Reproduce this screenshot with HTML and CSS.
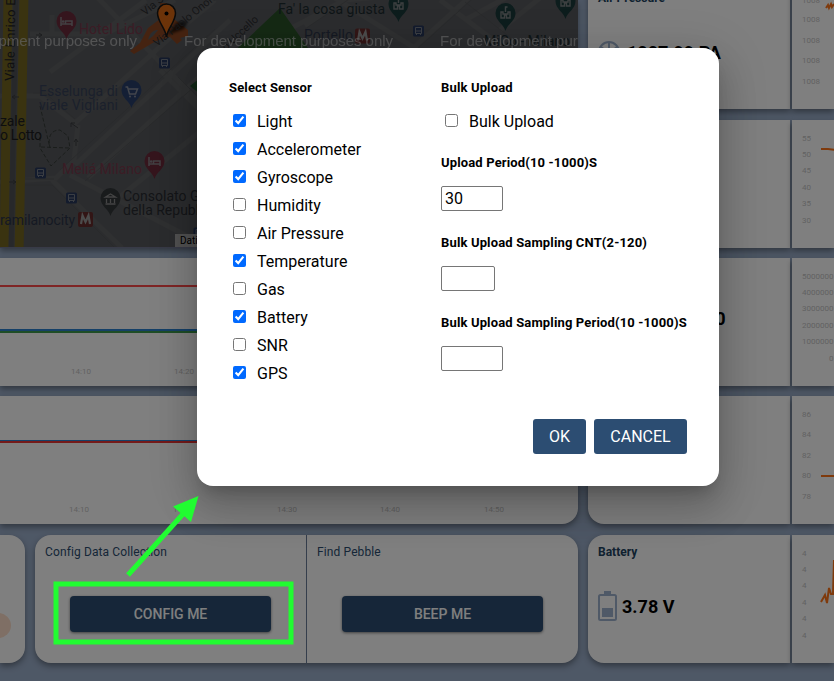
FILE: index.html
```html
<!DOCTYPE html>
<html lang="en">
<head>
<meta charset="utf-8">
<title>Pebble dashboard</title>
<link rel="stylesheet" href="styles.css">
</head>
<body>
<main class="dashboard">
  <div class="left">
    <div class="map">
      <svg width="578" height="248" viewBox="0 0 578 248">
        <defs>
          <path id="drop" d="M0 14C-2 7-10 4-10-4a10 10 0 0 1 20 0C10 4 2 7 0 14z"/>
          <g id="bus"><rect x="-5.500" y="-5.500" width="11" height="11" rx="1.500" fill="#26375a"/><path d="M-3-3.500h6v6h-6zM-3 0h6M-2 2.500v1.500M2 2.500v1.500" fill="none" stroke="#777c86"/></g>
          <g id="bed"><use href="#drop" fill="#6a2b3b"/><path d="M-5.500-8v9M-5.500-1h11v2M5.500-1v-3H-1v3" fill="none" stroke="#858087" stroke-width="1.500"/><circle cx="-3.300" cy="-3.500" r="1.300" fill="#858087"/></g>
          <g id="fort"><use href="#drop" fill="#1b3a3a"/><path d="M-4.500-5v6h3.500v-3h2v3h3.500v-6h-2v2h-5v-2zM0-5v-5h2" fill="none" stroke="#7b8182" stroke-width="1.400"/></g>
          <g id="metro"><rect x="-7.500" y="-7.500" width="15" height="15" rx="2" fill="#652a2a"/><path d="M-4.500 4.500L-3-4 0 2.500 3-4 4.500 4.500" fill="none" stroke="#999" stroke-width="2.200"/></g>
          <filter id="soft"><feGaussianBlur stdDeviation="1.500"/></filter>
        </defs>
        <rect width="578" height="248" fill="#57595d"/>
        <g fill="none" stroke="#5f6062" stroke-width="5">
          <path d="M0 96h40l35 27 105-94 35-29M50 72L146 0M95-5L250 155M32 34h20V15M75 165L230 20M70 175l140 73M78 125l-4 35-18 18-56 4M52 180l70 68M88 178L240 40M110 205L245 95M160 70l60 60M30 34h75l70-34M305 26l60-40M230 60L345 0 578-20M400 60L475-8M440 0l80 60M465 20L520-10M330-5l120 75M500 30L550-10"/>
        </g>
        <g fill="none" stroke="#515356" stroke-width=".8"><path d="M60 170L215 29M85 181L244 44M33 93h12l30 26M0 179h54M0 185h52l63 63M178 77l50 50M465 2l70 55M305 29l65-44M405 60L480-8"/></g>
        <path d="M225 60L280 8l28 40v12z" fill="#2a5329"/>
        <path d="M190 86l10-8v16z" fill="#245331"/>
        <path d="M8-5L4 255M24-5L19 255" stroke="#746621" stroke-width="9"/>
        <path d="M16-5L11 255" stroke="#4f5154" stroke-width="5"/>
        <path d="M40 106l10 42c-3-14 3-18 10-18l8 6 2 12-19 18-11-18v-15M41 147l28 1" fill="none" stroke="#353b37" stroke-dasharray="4 2"/>
        <path d="M12 97h7m-7 0l3-2m-3 2l3 2M36 35h6m0 0l-3-2m3 2l-3 2M71 123l7 5m-7-5h4m-4 0v4M76 146v-7m0 0l-2 3m2-3l2 3M9 182h7m0 0l-3-2m3 2l-3 2" fill="none" stroke="#3b3d40"/>
        <use href="#bus" x="164.500" y="63"/><use href="#bus" x="40.500" y="173"/><use href="#bus" x="71.500" y="198"/><use href="#bus" x="418.500" y="31"/><use href="#bus" x="199" y="233"/>
        <use href="#bed" x="66.500" y="25"/><use href="#bed" x="154.500" y="165"/>
        <g transform="translate(131.500 94)"><use href="#drop" fill="#283f6b"/><path d="M-6-7h2l2 7h6l2-5h-9" fill="none" stroke="#858b98" stroke-width="1.500"/><circle cx="-1.500" cy="2.500" r="1" fill="#858b98"/><circle cx="3.500" cy="2.500" r="1" fill="#858b98"/></g>
        <g transform="translate(110.500 202)"><use href="#drop" fill="#323639"/><path d="M-5-5L0-8 5-5zM-4-3v4M0-3v4M4-3v4M-5 2H5" fill="none" stroke="#888" stroke-width="1.300"/></g>
        <use href="#fort" x="398.500" y="8"/><use href="#fort" x="505.500" y="17"/><use href="#fort" x="565.500" y="5"/>
        <use href="#metro" x="85.500" y="219.500"/><use href="#metro" x="362.500" y="36"/>
        <path d="M130 51l10-8 8-15 12-9 0-16h6l8 8v8l14 11v6l-8 2 2 2-5 4-7-7-14 4-22 13z" fill="#8b4723"/>
        <path d="M148 40c2-8 6-10 10-10l-5 6z" fill="#57595d"/>
        <path d="M167 35l10-13 11-1-4 8z" filter="url(#soft)" opacity=".7"/>
        <g class="map-label">
          <text x="79" y="34" textLength="64" fill="#77384a">Hotel Lido</text>
          <text x="39" y="96" textLength="79" fill="#364158">Esselunga di</text>
          <text x="39" y="110" textLength="79" fill="#364158">viale Vigliani</text>
          <text x="0" y="126" textLength="25" fill="#1c1d20">zale</text>
          <text x="0" y="140" textLength="42" fill="#1c1d20">o Lotto</text>
          <text x="62" y="174" textLength="80" fill="#77384a">Meliá Milano</text>
          <text x="123" y="201" fill="#282b30">Consolato G</text>
          <text x="123" y="215" fill="#282b30">della Repubblica</text>
          <text x="0" y="225" textLength="75" fill="#2b3346">ramilanocity</text>
          <text x="278" y="14" textLength="107" fill="#1d2b2f">Fa' la cosa giusta</text>
          <text x="304" y="40" textLength="49" fill="#2b3346">Portello</text>
          <text x="484" y="46" textLength="86" fill="#1d2b2f">MiCo - Milano</text>
          <text transform="translate(14 81) rotate(-89)" fill="#202124" font-size="13" letter-spacing=".3">Viale Enrico Elia</text>
          <text transform="translate(145 16) rotate(-39)" fill="#2c2d30" font-size="11">Via Silva</text>
          <text transform="translate(157 47) rotate(-39)" fill="#2c2d30" font-size="11">Via Paolo Onorato</text>
          <text transform="translate(226 51) rotate(-43)" fill="#2c2d30" font-size="11">o Uccello</text>
        </g>
        <path d="M166.500 37c-1-9-9-15-9-24a9 9 0 0 1 18 0c0 9-8 15-9 24z" fill="#d96613" stroke="#161616" stroke-width="1.500"/><circle cx="166.500" cy="13.500" r="2"/>
        <g class="watermark"><text x="-72" y="46" textLength="209">For development purposes only</text><text x="184" y="46" textLength="209">For development purposes only</text><text x="440" y="46" textLength="209">For development purposes only</text></g>
        <rect x="175" y="234" width="130" height="13" fill="#a3a3a3"/><text class="attribution" x="180" y="244">Dati mappa</text>
        <path d="M0 247.500h578" stroke="#71758f"/>
      </svg>
    </div>
    <section class="card wide">
      <svg width="578" height="128"><path d="M0 28h578" stroke="#ff4a4a" stroke-width="2"/><path d="M0 72h578" stroke="#2a80d0" stroke-width="2"/><path d="M0 74h578" stroke="#3c9a4c" stroke-width="2"/><g class="axis"><text x="71" y="116">14:10</text><text x="174" y="116">14:20</text></g></svg>
    </section>
    <section class="card wide rounded">
      <svg width="578" height="128"><path d="M0 44.500h578" stroke="#2a80d0"/><path d="M0 46h578" stroke="#e83434" stroke-width="2"/><g class="axis"><text x="69" y="116">14:10</text><text x="173" y="116">14:20</text><text x="277" y="116">14:30</text><text x="380" y="116">14:40</text><text x="484" y="116">14:50</text></g></svg>
    </section>
    <div class="actions">
      <section class="card edge"><span class="blob"></span></section>
      <section class="card pair">
        <div class="action"><h2>Config Data Collection</h2><button>CONFIG ME</button></div>
        <div class="action"><h2>Find Pebble</h2><button>BEEP ME</button></div>
      </section>
    </div>
  </div>
  <div class="right">
    <div class="metric first"><section class="card stat"><h2>Air Pressure</h2><div class="reading"><svg width="22" height="30" viewBox="0 0 22 30"><circle cx="11" cy="15" r="10" fill="none" stroke="#9fb3cf" stroke-width="2"/><path d="M11 5v6M3 10l4 3M19 10l-4 3" stroke="#9fb3cf" stroke-width="2"/></svg><b>1007.99 PA</b></div></section>
      <section class="card graph"><svg width="42" height="128"><g class="axis"><text x="10" y="22">1008</text><text x="10" y="41">1008</text><text x="10" y="62">1008</text><text x="10" y="82">1008</text><text x="10" y="103">1008</text></g><path d="M34 27l2-3 1 3 2-4 1 3 2-3" class="trend"/></svg></section></div>
    <div class="metric"><section class="card stat"></section><section class="card graph"><svg width="42" height="128"><g class="axis"><text x="10" y="21">55</text><text x="10" y="37">50</text><text x="10" y="53">45</text><text x="10" y="70">40</text><text x="10" y="86">35</text><text x="10" y="103">30</text></g><path d="M29 29h7l7 1" class="trend"/></svg></section></div>
    <div class="metric"><section class="card stat"><div class="reading gas"><b>50000</b></div></section><section class="card graph"><svg width="42" height="128"><g class="axis"><text x="10" y="21">5000000</text><text x="10" y="37">4000000</text><text x="10" y="53">3000000</text><text x="10" y="70">2000000</text><text x="10" y="86">1000000</text><text x="37" y="103">0</text></g></svg></section></div>
    <div class="metric"><section class="card stat"></section><section class="card graph"><svg width="42" height="128"><g class="axis"><text x="10" y="21">86</text><text x="10" y="41">84</text><text x="10" y="62">82</text><text x="10" y="82">80</text><text x="10" y="103">78</text></g><path d="M29 80h14" class="trend"/></svg></section></div>
    <div class="metric last"><section class="card stat"><h2>Battery</h2><div class="reading"><svg width="20" height="30" viewBox="0 0 20 30"><path d="M6 0h7v3H6z" fill="#9fb3cf"/><rect x="1" y="4" width="17" height="25" rx="1.500" fill="none" stroke="#9fb3cf" stroke-width="2"/><rect x="4" y="17" width="11" height="9" fill="#9fb3cf"/></svg><b>3.78 V</b></div></section>
      <section class="card graph"><svg width="42" height="128"><g class="axis"><text x="10" y="21">4</text><text x="10" y="37">4</text><text x="10" y="53">4</text><text x="10" y="70">4</text><text x="10" y="86">4</text><text x="10" y="103">4</text></g><path d="M29 67l4-7 2 8 2-15 2 6h2l1-34" class="trend"/></svg></section></div>
  </div>
</main>
<div class="backdrop">
  <form class="dialog">
    <div class="columns">
      <div class="column">
        <h3>Select Sensor</h3>
        <label><input type="checkbox" checked>Light</label>
        <label><input type="checkbox" checked>Accelerometer</label>
        <label><input type="checkbox" checked>Gyroscope</label>
        <label><input type="checkbox">Humidity</label>
        <label><input type="checkbox">Air Pressure</label>
        <label><input type="checkbox" checked>Temperature</label>
        <label><input type="checkbox">Gas</label>
        <label><input type="checkbox" checked>Battery</label>
        <label><input type="checkbox">SNR</label>
        <label><input type="checkbox" checked>GPS</label>
      </div>
      <div class="column">
        <h3>Bulk Upload</h3>
        <label><input type="checkbox">Bulk Upload</label>
        <div class="field"><h3>Upload Period(10 -1000)S</h3><input class="number" type="text" value="30"></div>
        <div class="field"><h3>Bulk Upload Sampling CNT(2-120)</h3><input class="number short" type="text"></div>
        <div class="field"><h3>Bulk Upload Sampling Period(10 -1000)S</h3><input class="number" type="text"></div>
      </div>
    </div>
    <div class="buttons"><button type="button">OK</button><button type="button">CANCEL</button></div>
  </form>
</div>
<svg class="annotation" width="250" height="160" viewBox="0 0 250 160"><rect x="8" y="94" width="235" height="58" fill="none" stroke="#21fc31" stroke-width="5"/><path d="M80 85l55-61" stroke="#21fc31" stroke-width="5"/><path d="M150.500 6l-25.500 10.500 18 15.500z" fill="#21fc31"/></svg>
</body>
</html>
```
FILE: styles.css
```css
* { box-sizing: border-box; }
body { margin: 0; height: 681px; overflow: hidden; position: relative; background: #9db0cc; font-family: Roboto, sans-serif; }
h2, h3 { margin: 0; }
svg { display: block; flex: none; }
.dashboard { display: flex; gap: 10px; height: 681px; overflow: hidden; }
.left { width: 578px; flex: none; display: flex; flex-direction: column; }
.map { height: 248px; margin-bottom: 10px; overflow: hidden; box-shadow: 0 3px 6px rgba(0, 0, 0, .38); }
.map-label { font-size: 14px; }
.watermark { font: 15px "Liberation Sans", sans-serif; fill: #cfcfcf; opacity: .65; }
.attribution { font-size: 10px; }
.card { background: #fff; box-shadow: 0 3px 6px rgba(0, 0, 0, .38); height: 128px; flex: none; }
.wide { margin-bottom: 10px; }
.rounded { border-radius: 0 0 16px 0; margin-bottom: 11px; }
.axis { font-size: 8px; fill: #c4c4c4; }
.actions { display: flex; gap: 10px; }
.edge { width: 25px; border-radius: 0 16px 16px 0; overflow: hidden; padding-top: 78px; }
.blob { display: block; width: 25px; height: 25px; border-radius: 50%; background: #ffdfca; margin-left: -14px; }
.pair { width: 543px; border-radius: 16px; display: flex; }
.action { width: 271px; padding: 10px; }
.action + .action { border-left: 1px solid #6a7c99; width: 272px; }
.action h2 { font-size: 12px; line-height: 15px; font-weight: 400; letter-spacing: .12px; color: #2c4d70; }
.action button { display: block; width: 201px; height: 36px; margin: 36px 0 0 25px; padding: 0; border: 0; border-radius: 4px; background: #2c4d72; color: #fff; font: 500 14px Roboto, sans-serif; box-shadow: 0 1px 3px rgba(0, 0, 0, .5); }
.right { width: 246px; flex: none; }
.metric { display: flex; gap: 2px; margin-bottom: 10px; }
.first { margin-top: -19px; margin-bottom: 11px; }
.metric:nth-child(4) { margin-bottom: 11px; }
.stat { width: 202px; border-radius: 16px 0 0 16px; padding: 10px; }
.stat h2 { font-size: 12px; line-height: 15px; font-weight: 700; color: #204260; }
.graph { width: 42px; }
.reading { display: flex; align-items: center; gap: 4px; margin-top: 31px; font-size: 18px; }
.reading b { font-weight: 700; }
.first .reading { gap: 7px; margin-top: 31px; }
.gas { margin: 40px 0 0 76px; }
.trend { fill: none; stroke: #ff7519; stroke-width: 2; }
.backdrop { position: absolute; inset: 0; background: rgba(0, 0, 0, .5); padding: 48px 0 0 197px; }
.dialog { width: 522px; height: 438px; padding: 32px; border-radius: 16px; background: #fff; color: #000; box-shadow: 0 11px 15px -7px rgba(0, 0, 0, .2), 0 24px 38px 3px rgba(0, 0, 0, .14), 0 9px 46px 8px rgba(0, 0, 0, .12); }
.columns { display: flex; height: 339px; }
.column { width: 212px; flex: none; }
.column + .column { width: 246px; }
.dialog h3 { font-size: 13px; line-height: 15px; font-weight: 700; letter-spacing: .15px; white-space: nowrap; }
.column > h3 { margin-bottom: 12px; }
.dialog label { display: flex; height: 28px; line-height: 29px; font-size: 16px; }
.dialog input[type="checkbox"] { width: 13px; height: 13px; margin: 7px 11px 0 4px; accent-color: #0069ff; }
.field { height: 80px; padding-top: 20px; }
.number { display: block; width: 62px; height: 25px; margin-top: 16px; padding: 1px 3px; border: 1px solid #767676; border-radius: 2px; font: 16px Roboto, sans-serif; color: #000; background: #fff; }
.number.short { width: 54px; }
.buttons { display: flex; justify-content: flex-end; gap: 8px; }
.buttons button { width: 93px; height: 35px; padding: 0; border: 0; border-radius: 3px; background: #2c4d72; color: #fff; font: 16px Roboto, sans-serif; }
.buttons button:first-child { width: 53px; }
.annotation { position: absolute; left: 48px; top: 490px; }
```
